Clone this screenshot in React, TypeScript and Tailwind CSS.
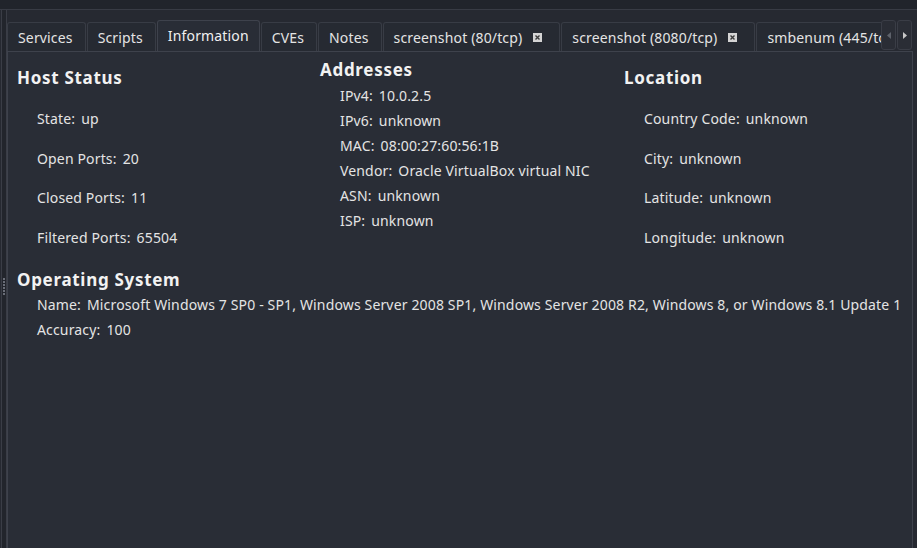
import React from "react";

const tabs = [
  { label: "Services" },
  { label: "Scripts" },
  { label: "Information", active: true },
  { label: "CVEs" },
  { label: "Notes" },
  { label: "screenshot (80/tcp)", closable: true },
  { label: "screenshot (8080/tcp)", closable: true },
  { label: "smbenum (445/tcp)" },
];

const CloseBox = () => (
  <span className="ml-[11px] inline-flex h-[9px] w-[9px] items-center justify-center bg-[#d4d4d4]">
    <svg width="7" height="7" viewBox="0 0 7 7">
      <path d="M1.5 1.5 L5.5 5.5 M5.5 1.5 L1.5 5.5" stroke="#3a3a3a" strokeWidth="1.4" />
    </svg>
  </span>
);

const Field = ({ label, value }: { label: string; value: string }) => (
  <div className="whitespace-nowrap">
    <span>{label}:</span>
    <span className="ml-[6px]">{value}</span>
  </div>
);

const Heading = ({ children }: { children: React.ReactNode }) => (
  <h2 className="text-[17px] font-bold leading-[20px] tracking-[0.7px] text-[#f2f2f2]">
    {children}
  </h2>
);

export default function App() {
  return (
    <div
      className="flex h-[548px] w-[917px] flex-col overflow-hidden bg-[#262931] text-[14px] tracking-[0.15px] text-[#e4e4e4]"
      style={{ fontFamily: '"Noto Sans", "Open Sans", sans-serif' }}
    >
      {/* top strip */}
      <div className="h-[10px] shrink-0 border-b border-[#383b44] bg-[#21242b]" />

      <div className="flex min-h-0 flex-1">
        {/* splitter */}
        <div className="relative ml-[1px] w-[6px] shrink-0 border-l border-r border-[#3a3d46] bg-[#22252c]">
          <div className="absolute left-[1px] top-[268px] flex flex-col gap-[1px]">
            {[0, 1, 2, 3, 4, 5].map((i) => (
              <div key={i} className="h-[2px] w-[2px] bg-[#6a6e78]" />
            ))}
          </div>
        </div>

        <div className="flex min-w-0 flex-1 flex-col">
          {/* tab bar */}
          <div className="flex h-[41px] shrink-0 items-end pr-[5px]">
            <div className="flex min-w-0 flex-1 items-end overflow-hidden">
              {tabs.map((t) =>
                t.active ? (
                  <div
                    key={t.label}
                    className="-mb-px z-10 mr-px flex h-[32px] shrink-0 items-center rounded-t-[3px] border border-b-0 border-[#3e424c] bg-[#292d36] px-[10px] pb-[2px] text-[#f0f0f0]"
                  >
                    {t.label}
                  </div>
                ) : (
                  <div
                    key={t.label}
                    className={`mr-px flex h-[29px] shrink-0 items-center rounded-t-[3px] border border-b-0 border-[#383c45] bg-[#262a32] pl-[10px] ${
                      t.closable ? "pr-[17px]" : "pr-[12px]"
                    }`}
                  >
                    {t.label}
                    {t.closable && <CloseBox />}
                  </div>
                )
              )}
            </div>
            <div className="mb-px flex shrink-0 gap-px">
              <div className="flex h-[30px] w-[15px] items-center justify-center rounded-[3px] border border-[#3a3d46] bg-[#2a2d35]">
                <svg width="4" height="7" viewBox="0 0 4 7">
                  <path d="M4 0 L0 3.5 L4 7 Z" fill="#5e626b" />
                </svg>
              </div>
              <div className="flex h-[30px] w-[15px] items-center justify-center rounded-[3px] border border-[#3a3d46] bg-[#2a2d35]">
                <svg width="4" height="7" viewBox="0 0 4 7">
                  <path d="M0 0 L4 3.5 L0 7 Z" fill="#c8c8c8" />
                </svg>
              </div>
            </div>
          </div>

          {/* content pane */}
          <div className="mr-[4px] min-h-0 flex-1 border border-b-0 border-[#3e424c] bg-[#292d36]">
            <div className="grid grid-cols-[303px_304px_1fr] pl-[9px]">
              <section className="pt-[16px]">
                <Heading>Host Status</Heading>
                <div className="ml-[20px] mt-[21px] flex flex-col gap-[19.5px] leading-[20px]">
                  <Field label="State" value="up" />
                  <Field label="Open Ports" value="20" />
                  <Field label="Closed Ports" value="11" />
                  <Field label="Filtered Ports" value="65504" />
                </div>
              </section>
              <section className="pt-[8px]">
                <Heading>Addresses</Heading>
                <div className="ml-[20px] mt-[6px] flex flex-col gap-[5px] leading-[20px]">
                  <Field label="IPv4" value="10.0.2.5" />
                  <Field label="IPv6" value="unknown" />
                  <Field label="MAC" value="08:00:27:60:56:1B" />
                  <Field label="Vendor" value="Oracle VirtualBox virtual NIC" />
                  <Field label="ASN" value="unknown" />
                  <Field label="ISP" value="unknown" />
                </div>
              </section>
              <section className="pt-[16px]">
                <Heading>Location</Heading>
                <div className="ml-[20px] mt-[21px] flex flex-col gap-[19.5px] leading-[20px]">
                  <Field label="Country Code" value="unknown" />
                  <Field label="City" value="unknown" />
                  <Field label="Latitude" value="unknown" />
                  <Field label="Longitude" value="unknown" />
                </div>
              </section>
            </div>

            <section className="mt-[22px] pl-[9px]">
              <Heading>Operating System</Heading>
              <div className="ml-[20px] mt-[5px] flex flex-col gap-[5px] leading-[20px]">
                <Field
                  label="Name"
                  value="Microsoft Windows 7 SP0 - SP1, Windows Server 2008 SP1, Windows Server 2008 R2, Windows 8, or Windows 8.1 Update 1"
                />
                <Field label="Accuracy" value="100" />
              </div>
            </section>
          </div>
        </div>
      </div>
    </div>
  );
}
